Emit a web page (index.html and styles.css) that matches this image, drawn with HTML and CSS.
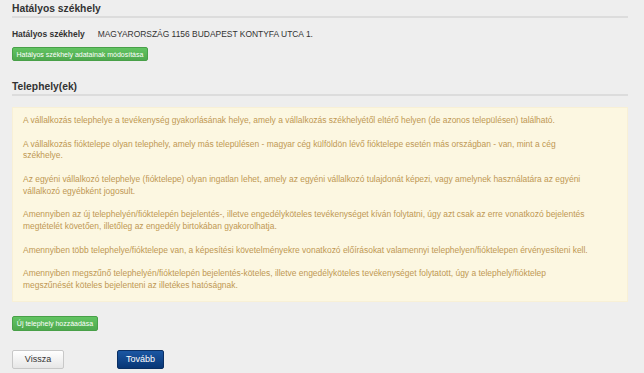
FILE: index.html
```html
<!DOCTYPE html>
<html lang="hu">
<head>
    <meta charset="UTF-8">
    <title>Telephelyek</title>
    <link rel="stylesheet" href="styles.css">
</head>
<body>

<div class="page">
    <h2 class="section-title first">Hatályos székhely</h2>

    <div class="info-row">
        <span class="info-label">Hatályos székhely</span><span class="info-value">MAGYARORSZÁG 1156 BUDAPEST KONTYFA UTCA 1.</span>
    </div>

    <button class="btn-green btn-edit">Hatályos székhely adatainak módosítása</button>

    <h2 class="section-title">Telephely(ek)</h2>

    <div class="alert">
        <p>A vállalkozás telephelye a tevékenység gyakorlásának helye, amely a vállalkozás székhelyétől eltérő helyen (de azonos településen) található.</p>
        <p>A vállalkozás fióktelepe olyan telephely, amely más településen - magyar cég külföldön lévő fióktelepe esetén más országban - van, mint a cég székhelye.</p>
        <p>Az egyéni vállalkozó telephelye (fióktelepe) olyan ingatlan lehet, amely az egyéni vállalkozó tulajdonát képezi, vagy amelynek használatára az egyéni vállalkozó egyébként jogosult.</p>
        <p>Amennyiben az új telephelyén/fióktelepén bejelentés-, illetve engedélyköteles tevékenységet kíván folytatni, úgy azt csak az erre vonatkozó bejelentés megtételét követően, illetőleg az engedély birtokában gyakorolhatja.</p>
        <p>Amennyiben több telephelye/fióktelepe van, a képesítési követelményekre vonatkozó előírásokat valamennyi telephelyen/fióktelepen érvényesíteni kell.</p>
        <p>Amennyiben megszűnő telephelyén/fióktelepén bejelentés-köteles, illetve engedélyköteles tevékenységet folytatott, úgy a telephely/fióktelep megszűnését köteles bejelenteni az illetékes hatóságnak.</p>
    </div>

    <button class="btn-green btn-add">Új telephely hozzáadása</button>

    <div class="nav-buttons">
        <button class="btn-back">Vissza</button>
        <button class="btn-next">Tovább</button>
    </div>
</div>

</body>
</html>
```

FILE: styles.css
```css
body {
    font-family: "Liberation Sans", Arial, sans-serif;
    background-color: #eeeeee;
    color: #333;
    margin: 0;
    padding: 0;
}

.page {
    width: 616px;
    margin-left: 12px;
}

.section-title {
    font-size: 10.3px;
    font-weight: bold;
    line-height: 13px;
    margin: 19px 0 0;
    padding: 0 0 1px;
    border-bottom: 2px solid #dcdcdc;
}

.section-title.first {
    margin-top: 2px;
}

.info-row {
    font-size: 8.45px;
    line-height: 12px;
    margin-top: 10px;
}

.info-label {
    font-weight: bold;
    margin-right: 13px;
}

.btn-green {
    display: block;
    font-family: "Liberation Sans", Arial, sans-serif;
    color: #fff;
    font-size: 7px;
    white-space: nowrap;
    background: linear-gradient(#62c462, #4ea94e);
    border: 1px solid #48a048;
    border-radius: 2px;
    padding: 0;
    cursor: pointer;
}

.btn-edit {
    height: 14px;
    width: 136px;
    margin-top: 7px;
}

.btn-add {
    height: 15px;
    width: 86px;
    margin-top: 14px;
}

.alert {
    margin-top: 11px;
    background-color: #fcf7e1;
    border: 1px solid #f8f0d6;
    color: #c09853;
    font-size: 8.45px;
    line-height: 11.8px;
    padding: 7px 34px 9px 10px;
}

.alert p {
    margin: 0 0 11.8px;
}

.alert p:last-child {
    margin-bottom: 0;
}

.nav-buttons {
    display: flex;
    gap: 53px;
    margin-top: 19px;
}

.nav-buttons button {
    font-family: "Liberation Sans", Arial, sans-serif;
    font-size: 9px;
    height: 19px;
    padding: 0;
    border-radius: 2px;
    cursor: pointer;
}

.btn-back {
    width: 52px;
    color: #333;
    background: linear-gradient(#ffffff, #e6e6e6);
    border: 1px solid #c8c8c8;
}

.btn-next {
    width: 47px;
    color: #fff;
    background: linear-gradient(#1b57a3, #083675);
    border: 1px solid #0a2f63;
}
```
